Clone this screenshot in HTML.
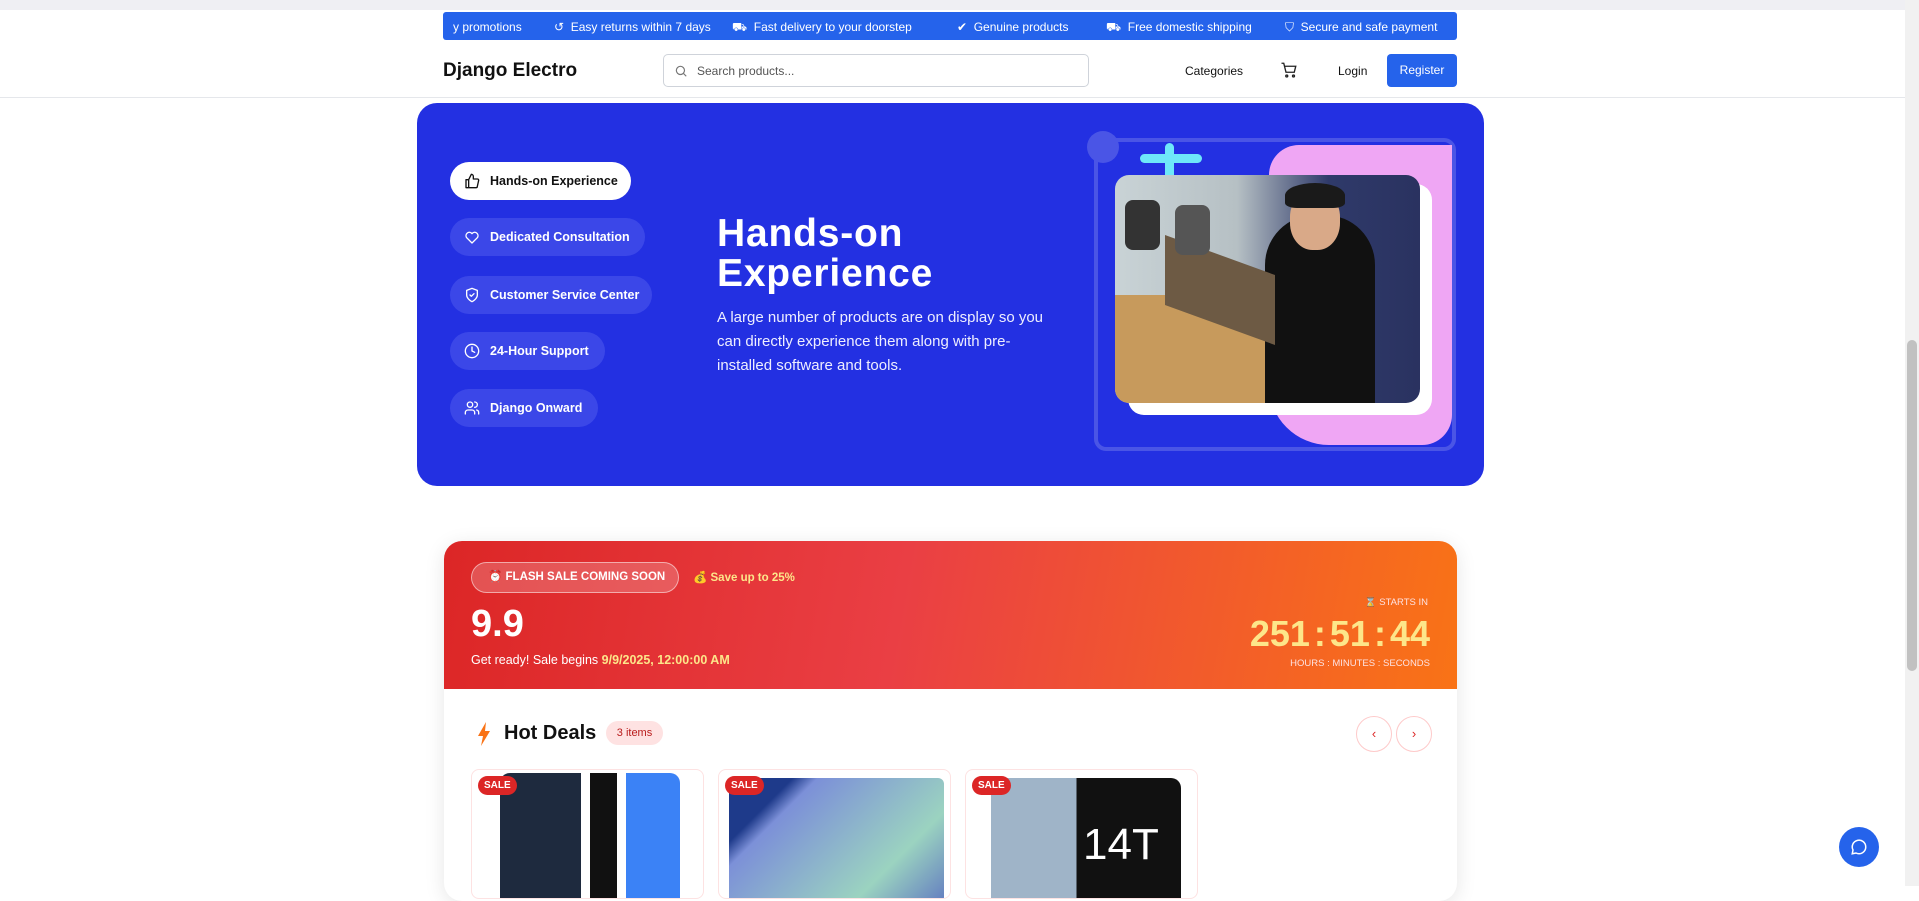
<!DOCTYPE html>
<html><head><meta charset="utf-8"><style>
*{box-sizing:border-box;margin:0;padding:0}
body{width:1919px;height:886px;overflow:hidden;background:#fff;font-family:"Liberation Sans",sans-serif;position:relative;color:#111}
.a{position:absolute}
.promo{left:443px;top:12px;width:1014px;height:28px;background:#2563eb;border-radius:3px;color:#fff;font-size:12px;overflow:hidden}
.promo span{position:absolute;top:8px;white-space:nowrap}
.pill{position:absolute;left:450px;height:38px;border-radius:19px;background:#3b47e8;color:#fff;font-size:12.5px;font-weight:bold;display:flex;align-items:center;padding-left:14px;gap:10px}
.pill svg{width:16px;height:16px;fill:none;stroke:currentColor;stroke-width:2;stroke-linecap:round;stroke-linejoin:round}
.card{position:absolute;top:769px;width:233px;height:130px;border:1px solid #fde2e2;border-radius:8px;overflow:hidden;background:#fff}
.sale{position:absolute;left:6px;top:6px;background:#dc2626;color:#fff;font-size:10px;font-weight:bold;padding:4px 6px;border-radius:10px;z-index:2}
.sep{margin:0 4px}
</style></head><body>
<div class="a" style="left:0;top:0;width:1919px;height:10px;background:#efeff3"></div>
<div class="a promo">
<span style="left:10px">y promotions</span>
<span style="left:111px">↺ &nbsp;Easy returns within 7 days</span>
<span style="left:289px">⛟ &nbsp;Fast delivery to your doorstep</span>
<span style="left:514px">✔ &nbsp;Genuine products</span>
<span style="left:663px">⛟ &nbsp;Free domestic shipping</span>
<span style="left:842px">⛉ &nbsp;Secure and safe payment</span>
</div>
<div class="a" style="left:443px;top:60px;font-size:19px;font-weight:bold;color:#111">Django Electro</div>
<div class="a" style="left:663px;top:54px;width:426px;height:33px;border:1px solid #cfd3da;border-radius:5px;font-size:12px;color:#555;padding:9px 0 0 33px">Search products...
<svg class="a" style="left:10px;top:9px" width="14" height="14" viewBox="0 0 24 24" fill="none" stroke="#777" stroke-width="2"><circle cx="11" cy="11" r="7"/><path d="M21 21l-5-5"/></svg></div>
<div class="a" style="left:1185px;top:64px;font-size:12px">Categories</div>
<svg class="a" style="left:1280px;top:61px" width="18" height="18" viewBox="0 0 24 24" fill="none" stroke="#222" stroke-width="1.8"><path d="M2 3h3l3 12h11l2-8H6"/><circle cx="9" cy="20" r="1.3"/><circle cx="18" cy="20" r="1.3"/></svg>
<div class="a" style="left:1338px;top:64px;font-size:12px">Login</div>
<div class="a" style="left:1387px;top:54px;width:70px;height:33px;background:#2563eb;border-radius:4px;color:#fff;font-size:12px;text-align:center;line-height:33px">Register</div>
<div class="a" style="left:0;top:97px;width:1905px;height:1px;background:#e5e7eb"></div>

<div class="a" style="left:417px;top:103px;width:1067px;height:383px;background:#2330e2;border-radius:20px"></div>
<div class="pill" style="top:162px;width:181px;background:#fff;color:#111"><svg viewBox="0 0 24 24"><path d="M7 10v12H3V10zM7 10l4-8a3 3 0 013 3v4h6a2 2 0 012 2l-2 9a2 2 0 01-2 2H7"/></svg>Hands-on Experience</div>
<div class="pill" style="top:218px;width:195px"><svg viewBox="0 0 24 24"><path d="M12 21l-8-8a5 5 0 017-7l1 1 1-1a5 5 0 017 7z"/></svg>Dedicated Consultation</div>
<div class="pill" style="top:276px;width:202px"><svg viewBox="0 0 24 24"><path d="M12 22s8-4 8-10V5l-8-3-8 3v7c0 6 8 10 8 10z"/><path d="M9 12l2 2 4-4"/></svg>Customer Service Center</div>
<div class="pill" style="top:332px;width:155px"><svg viewBox="0 0 24 24"><circle cx="12" cy="12" r="10"/><path d="M12 6v6l4 2"/></svg>24-Hour Support</div>
<div class="pill" style="top:389px;width:148px"><svg viewBox="0 0 24 24"><circle cx="9" cy="7" r="4"/><path d="M2 21v-2a4 4 0 014-4h6a4 4 0 014 4v2M16 3a4 4 0 010 8M22 21v-2a4 4 0 00-3-4"/></svg>Django Onward</div>
<div class="a" style="left:717px;top:214px;color:#fff;font-size:39px;font-weight:900;line-height:40px;letter-spacing:0.8px">Hands-on<br>Experience</div>
<div class="a" style="left:717px;top:306px;width:340px;color:#eef;font-size:15px;line-height:24px">A large number of products are on display so you can directly experience them along with pre-installed software and tools.</div>
<div class="a" style="left:1094px;top:138px;width:362px;height:313px;border:4px solid #4a55e6;border-radius:12px"></div>
<div class="a" style="left:1087px;top:131px;width:32px;height:32px;border-radius:50%;background:#4a55e6"></div>
<div class="a" style="left:1269px;top:145px;width:183px;height:300px;background:#efa6f4;border-radius:30px 0 30px 60px"></div>
<div class="a" style="left:1140px;top:154px;width:62px;height:9px;background:#6ee7f9;border-radius:5px"></div>
<div class="a" style="left:1165px;top:143px;width:9px;height:45px;background:#6ee7f9;border-radius:5px"></div>
<div class="a" style="left:1128px;top:184px;width:304px;height:231px;background:#fff;border-radius:16px"></div>
<div class="a" style="left:1115px;top:175px;width:305px;height:228px;border-radius:14px;overflow:hidden;background:linear-gradient(90deg,#c9d3d6 0%,#b6c0c4 40%,#2f3a6a 70%,#2a3260 100%)">
<div class="a" style="left:0;top:120px;width:160px;height:110px;background:#c79a5c"></div>
<div class="a" style="left:150px;top:40px;width:110px;height:200px;background:#111;border-radius:50px 50px 0 0"></div>
<div class="a" style="left:175px;top:15px;width:50px;height:60px;background:#d9a988;border-radius:45%"></div>
<div class="a" style="left:170px;top:8px;width:60px;height:25px;background:#1a1a1a;border-radius:50% 50% 20% 20%"></div>
<div class="a" style="left:50px;top:80px;width:110px;height:70px;background:#6d5a44;transform:skewY(20deg)"></div>
<div class="a" style="left:10px;top:25px;width:35px;height:50px;background:#333;border-radius:8px"></div>
<div class="a" style="left:60px;top:30px;width:35px;height:50px;background:#555;border-radius:8px"></div>
</div>

<div class="a" style="left:444px;top:541px;width:1013px;height:360px;background:#fff;border-radius:18px;box-shadow:0 4px 20px rgba(0,0,0,.1);overflow:hidden">
<div class="a" style="left:0;top:0;width:1013px;height:148px;background:linear-gradient(100deg,#dc2626 0%,#ea3f44 45%,#f97316 100%)"></div>
<div class="a" style="left:27px;top:21px;width:208px;height:31px;border:1px solid rgba(255,255,255,.5);background:rgba(255,255,255,.2);border-radius:16px;color:#fff;font-size:11.5px;font-weight:bold;line-height:29px;padding-left:16px">⏰ FLASH SALE COMING SOON</div>
<div class="a" style="left:249px;top:29px;color:#fde68a;font-size:11.5px;font-weight:bold">💰 Save up to 25%</div>
<div class="a" style="left:27px;top:62px;color:#fff;font-size:38px;font-weight:bold">9.9</div>
<div class="a" style="left:27px;top:112px;color:#fff;font-size:12.5px">Get ready! Sale begins <span style="color:#fde68a;font-weight:bold">9/9/2025, 12:00:00 AM</span></div>
<div class="a" style="right:29px;top:56px;color:#fde2e2;font-size:9.5px">⌛ STARTS IN</div>
<div class="a" style="right:27px;top:72px;color:#fde68a;font-size:36px;font-weight:bold;white-space:nowrap">251<span class="sep">:</span>51<span class="sep">:</span>44</div>
<div class="a" style="right:27px;top:117px;color:#fde2e2;font-size:9.5px">HOURS : MINUTES : SECONDS</div>
<svg class="a" style="left:33px;top:181px" width="14" height="24" viewBox="0 0 14 24"><path d="M9 0L1 14h5l-2 10 9-15H8z" fill="#f97316"/></svg>
<div class="a" style="left:60px;top:181px;font-size:20px;font-weight:bold">Hot Deals</div>
<div class="a" style="left:162px;top:180px;width:57px;height:24px;background:#fee2e2;color:#b91c1c;border-radius:12px;font-size:11px;text-align:center;line-height:24px">3 items</div>
<div class="a" style="left:912px;top:175px;width:36px;height:36px;border:1px solid #fecaca;border-radius:50%;color:#dc2626;text-align:center;line-height:34px;font-size:13px">‹</div>
<div class="a" style="left:952px;top:175px;width:36px;height:36px;border:1px solid #fecaca;border-radius:50%;color:#dc2626;text-align:center;line-height:34px;font-size:13px">›</div>
</div>
<div class="card" style="left:471px"><div class="sale">SALE</div><div class="a" style="left:28px;top:3px;width:180px;height:140px;background:linear-gradient(90deg,#1e2a3e 0 45%,#fff 45% 50%,#111 50% 65%,#fff 65% 70%,#3b82f6 70%);border-radius:10px"></div></div>
<div class="card" style="left:718px"><div class="sale">SALE</div><div class="a" style="left:10px;top:8px;width:215px;height:140px;background:linear-gradient(135deg,#1e3a8a 0 18%,#7c90d8 25%,#9bd3c0 70%,#5a6fc0);border-radius:6px"></div></div>
<div class="card" style="left:965px"><div class="sale">SALE</div><div class="a" style="left:25px;top:8px;width:190px;height:140px;background:linear-gradient(90deg,#9fb4c8 0 45%,#111 45%);border-radius:10px"></div><div class="a" style="left:117px;top:50px;color:#fff;font-size:44px">14T</div></div>

<div class="a" style="left:1905px;top:0;width:14px;height:886px;background:#f1f1f1"></div>
<div class="a" style="left:1907px;top:340px;width:10px;height:331px;background:#c1c1c1;border-radius:5px"></div>
<div class="a" style="left:1839px;top:827px;width:40px;height:40px;border-radius:50%;background:#2563eb"><svg style="margin:11px" width="18" height="18" viewBox="0 0 24 24" fill="none" stroke="#fff" stroke-width="2"><path d="M21 12a9 9 0 01-13 8l-5 1 1-5a9 9 0 1117-4z"/></svg></div>
</body></html>
